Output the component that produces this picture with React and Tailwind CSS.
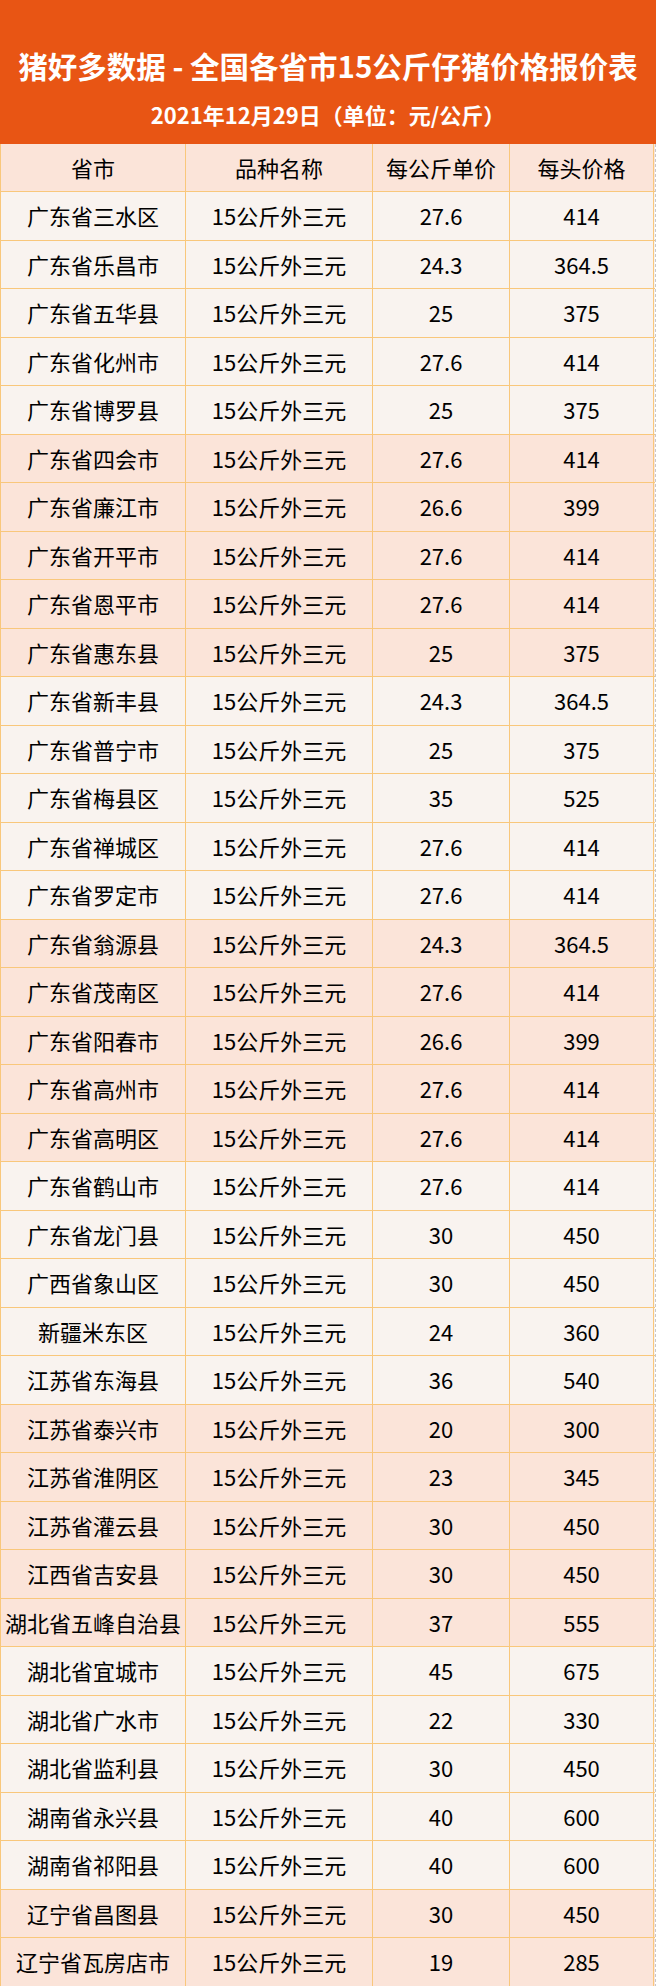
import React from 'react';

const rows = [
  ['广东省三水区', '27.6', '414'],
  ['广东省乐昌市', '24.3', '364.5'],
  ['广东省五华县', '25', '375'],
  ['广东省化州市', '27.6', '414'],
  ['广东省博罗县', '25', '375'],
  ['广东省四会市', '27.6', '414'],
  ['广东省廉江市', '26.6', '399'],
  ['广东省开平市', '27.6', '414'],
  ['广东省恩平市', '27.6', '414'],
  ['广东省惠东县', '25', '375'],
  ['广东省新丰县', '24.3', '364.5'],
  ['广东省普宁市', '25', '375'],
  ['广东省梅县区', '35', '525'],
  ['广东省禅城区', '27.6', '414'],
  ['广东省罗定市', '27.6', '414'],
  ['广东省翁源县', '24.3', '364.5'],
  ['广东省茂南区', '27.6', '414'],
  ['广东省阳春市', '26.6', '399'],
  ['广东省高州市', '27.6', '414'],
  ['广东省高明区', '27.6', '414'],
  ['广东省鹤山市', '27.6', '414'],
  ['广东省龙门县', '30', '450'],
  ['广西省象山区', '30', '450'],
  ['新疆米东区', '24', '360'],
  ['江苏省东海县', '36', '540'],
  ['江苏省泰兴市', '20', '300'],
  ['江苏省淮阴区', '23', '345'],
  ['江苏省灌云县', '30', '450'],
  ['江西省吉安县', '30', '450'],
  ['湖北省五峰自治县', '37', '555'],
  ['湖北省宜城市', '45', '675'],
  ['湖北省广水市', '22', '330'],
  ['湖北省监利县', '30', '450'],
  ['湖南省永兴县', '40', '600'],
  ['湖南省祁阳县', '40', '600'],
  ['辽宁省昌图县', '30', '450'],
  ['辽宁省瓦房店市', '19', '285'],
];

// cell border + centering shared by every cell
const cell = "flex items-center justify-center border-r border-[#f9c77b]";

function Row({ cols, bg, head }) {
  return (
    <div className={`grid grid-cols-[186px_187px_137px_144px] border-b border-[#f9c77b] ${head ? 'h-[48px]' : 'h-[48.5px]'} ${bg}`}>
      <div className={`${cell} border-l`}>{cols[0]}</div>
      <div className={cell}>{cols[1]}</div>
      <div className={cell}>{cols[2]}</div>
      <div className={cell}>{cols[3]}</div>
    </div>
  );
}

export default function App() {
  return (
    <div className="w-[656px] bg-white font-['Noto_Sans_CJK_SC',sans-serif] text-black">
      {/* Orange title block */}
      <div className="h-[144px] bg-[#e85514] flex flex-col items-center pt-[46px] text-white font-bold">
        <h1 className="text-[29.5px] leading-[38px]">猪好多数据 - 全国各省市15公斤仔猪价格报价表</h1>
        <p className="mt-[15px] text-[22px] leading-[30px]">2021年12月29日（单位：元/公斤）</p>
      </div>

      {/* Table */}
      <div className="w-[656px] border-r border-dashed border-[#c8c8c8] text-[22px]">
        <Row head cols={['省市', '品种名称', '每公斤单价', '每头价格']} bg="bg-[#fbe4d9]" />
        {rows.map((r, i) => (
          <Row
            key={r[0]}
            cols={[r[0], '15公斤外三元', r[1], r[2]]}
            bg={Math.floor(i / 5) % 2 === 1 ? 'bg-[#fbe4d9]' : 'bg-[#f9f3ef]'}
          />
        ))}
      </div>
    </div>
  );
}
